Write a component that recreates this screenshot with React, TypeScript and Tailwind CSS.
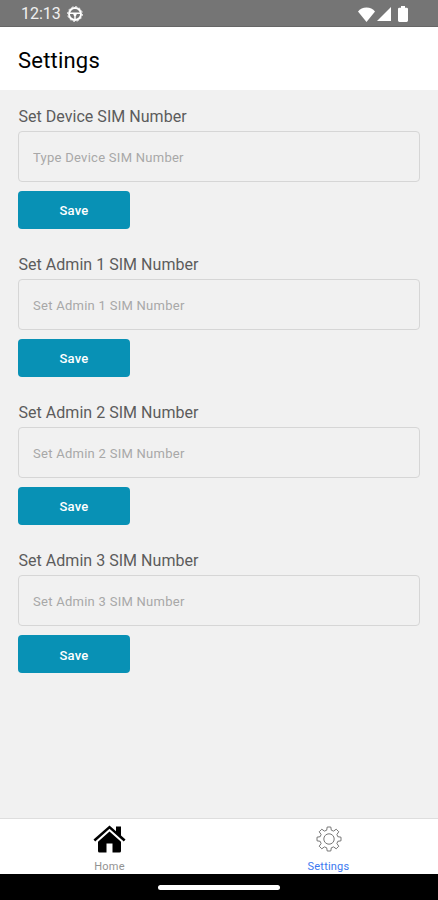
import React, { useState } from "react";

interface SimField {
  id: string;
  label: string;
  placeholder: string;
}

const fields: SimField[] = [
  { id: "device", label: "Set Device SIM Number", placeholder: "Type Device SIM Number" },
  { id: "admin1", label: "Set Admin 1 SIM Number", placeholder: "Set Admin 1 SIM Number" },
  { id: "admin2", label: "Set Admin 2 SIM Number", placeholder: "Set Admin 2 SIM Number" },
  { id: "admin3", label: "Set Admin 3 SIM Number", placeholder: "Set Admin 3 SIM Number" },
];

const StatusBar: React.FC = () => (
  <div className="flex h-[27px] shrink-0 items-center border-b border-[#666666] bg-[#757575] pl-[21px] pr-[30px] pt-[2px] text-white">
    <span className="text-[16px] leading-none text-[#f0f0f0]">12:13</span>
    <svg viewBox="0 0 16 16" className="ml-[6px] h-4 w-4" fill="none" stroke="currentColor">
      <circle cx="8" cy="8" r="6" strokeWidth="1.9" />
      <circle cx="8" cy="8" r="7.3" strokeWidth="1" strokeDasharray="2 1.82" />
      <path d="M3 7.2h10M8 8v5.5" strokeWidth="1.5" />
      <path d="M5.8 7h4.4L9 10H7z" fill="currentColor" stroke="none" />
    </svg>
    <div className="ml-auto flex items-center">
      <svg viewBox="0 0 17 15" className="h-[15px] w-[17px]" fill="currentColor">
        <path d="M8.5 15 0 4.4C2 2 5 .5 8.5.5S15 2 17 4.4z" />
      </svg>
      <svg viewBox="0 0 14 14" className="ml-[2px] h-[14px] w-[14px]" fill="currentColor">
        <path d="M14 0v14H0z" />
      </svg>
      <svg viewBox="0 0 10 16" className="ml-[7px] h-4 w-[10px]" fill="currentColor">
        <path d="M3 0h4v1.7h1.6q1.4 0 1.4 1.4v11.5Q10 16 8.6 16H1.4Q0 16 0 14.6V3.1q0-1.4 1.4-1.4H3z" />
      </svg>
    </div>
  </div>
);

const HomeIcon: React.FC = () => (
  <svg viewBox="0 0 33 28" className="h-7 w-[33px]" fill="currentColor">
    <path d="M16.5 6.5 28 16.8V26q0 1.5-1.5 1.5h-7V18.5h-6v9h-7Q5 27.5 5 26v-9.2z" />
    <path d="M16.5.5 23 6.2V1.5h5v9l4.5 4-1.7 2L16.5 3.7 2.2 16.5l-1.7-2z" />
  </svg>
);

const GearIcon: React.FC = () => (
  <svg viewBox="0 0 26 26" className="h-[26px] w-[26px]" fill="none" stroke="#777777" strokeWidth="1" strokeLinejoin="round">
    <path d="M10.7 4.2 11.2 1h3.6l.5 3.2 2.3.9 2.6-1.9 2.6 2.6-1.9 2.6.9 2.3 3.2.5v3.6l-3.2.5-.9 2.3 1.9 2.6-2.6 2.6-2.6-1.9-2.3.9-.5 3.2h-3.6l-.5-3.2-2.3-.9-2.6 1.9-2.6-2.6 1.9-2.6-.9-2.3-3.2-.5v-3.6l3.2-.5.9-2.3-1.9-2.6 2.6-2.6 2.6 1.9z" />
    <circle cx="13" cy="13" r="5.2" />
  </svg>
);

const App: React.FC = () => {
  const [values, setValues] = useState<Record<string, string>>({});

  const handleChange = (id: string, value: string) => {
    setValues({ ...values, [id]: value });
  };

  return (
    <div className="flex h-[900px] w-full flex-col overflow-hidden bg-[#f1f1f1] font-['Roboto',sans-serif]">
      <StatusBar />
      <header className="flex h-[63px] shrink-0 items-center bg-white pl-[18px] pt-[3px]">
        <h1 className="text-[22px] tracking-[0.2px] text-black">Settings</h1>
      </header>
      <main className="flex flex-1 flex-col gap-[25.1px] px-[18px] pt-4">
        {fields.map((field) => (
          <div key={field.id} className="flex flex-col">
            <label htmlFor={field.id} className="pl-[0.5px] pt-px text-[16px] leading-5 tracking-[0.03px] text-[#5c5c5c]">
              {field.label}
            </label>
            <input
              id={field.id}
              type="text"
              value={values[field.id] ?? ""}
              placeholder={field.placeholder}
              onChange={(e) => handleChange(field.id, e.target.value)}
              className="mt-1 h-[51px] rounded-[4px] border border-[#d6d6d6] bg-transparent px-[14px] pt-px text-[13px] tracking-[0.27px] text-[#5c5c5c] placeholder:text-[#a8a8a8] focus:outline-none"
            />
            <button
              type="button"
              className="mt-[9px] h-[38px] w-[112px] rounded-[4px] bg-[#0891b5] pt-[2px] text-[13px] font-medium tracking-[0.2px] text-white"
            >
              Save
            </button>
          </div>
        ))}
      </main>
      <nav className="grid h-[56px] shrink-0 grid-cols-2 border-t border-[#dedede] bg-white text-[11px] leading-[13px] tracking-[0.2px]">
        <a className="flex flex-col items-center pt-[6px] text-black">
          <HomeIcon />
          <span className="mt-[7px] text-[#929292]">Home</span>
        </a>
        <a className="flex flex-col items-center pt-[7px] text-[#3b78f0]">
          <GearIcon />
          <span className="mt-2">Settings</span>
        </a>
      </nav>
      <div className="flex h-[26px] shrink-0 items-center justify-center bg-black">
        <div className="h-[5px] w-[122px] rounded-full bg-white" />
      </div>
    </div>
  );
};

export default App;
